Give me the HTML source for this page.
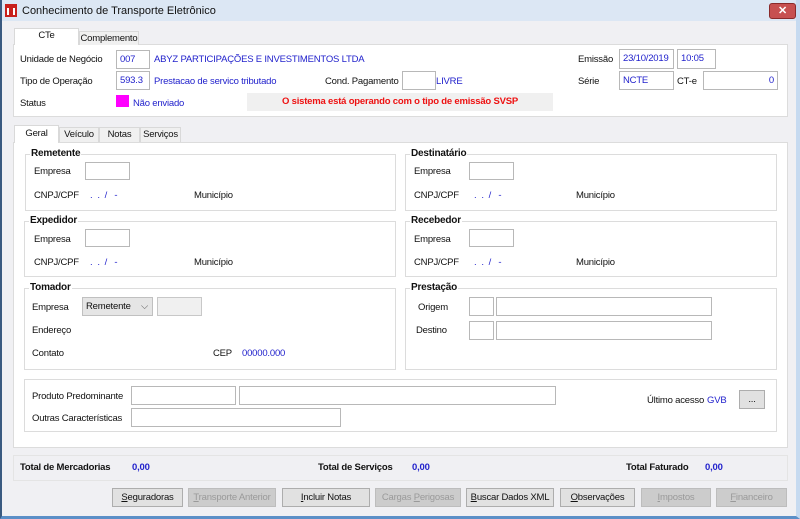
<!DOCTYPE html><html><head><meta charset="utf-8"><style>
*{box-sizing:border-box;margin:0;padding:0}
body{width:800px;height:519px;overflow:hidden;background:#f0f0f3;font-family:"Liberation Sans",sans-serif;font-size:9.5px;letter-spacing:-0.2px;color:#111;position:relative}
.a{position:absolute;white-space:nowrap}
.in{position:absolute;background:#fff;border:1px solid #b8b8b8;color:#2222cc;padding:0 3px;line-height:17px;white-space:nowrap}
.b{color:#2222cc}
.gb{position:absolute;border:1px solid #dcdcdc;background:#fff}
.gt{position:absolute;font-weight:bold;font-size:10px;background:#fff;padding:0 1px;top:-7px;left:4px;line-height:12px;white-space:nowrap}
.btn{position:absolute;top:488px;height:19px;border:1px solid #adadad;background:#e1e1e1;text-align:center;line-height:17px;white-space:nowrap;overflow:hidden}
.dis{color:#9a9a9a;background:#cccccc;border-color:#bdbdbd}
.tab{position:absolute;border:1px solid #d9d9d9;border-bottom:none;background:#f0f0f0;text-align:center;white-space:nowrap}
</style></head><body>
<div class="a" style="left:0;top:0;width:800px;height:519px;border-left:2px solid #3a5a80;border-right:4px solid #c6daf0;border-bottom:3px solid #5b8fc7"></div>
<div class="a" style="left:2px;top:0;width:794px;height:21px;background:#dce7f4"></div>
<div class="a" style="left:5px;top:4px;width:12px;height:13px;background:#c8201c"></div>
<div class="a" style="left:7px;top:8px;width:8px;height:7px;border-left:2px solid #fff;border-right:2px solid #fff"></div>
<div class="a" style="left:22px;top:5px;font-size:11px;letter-spacing:0">Conhecimento de Transporte Eletrônico</div>
<div class="a" style="left:769px;top:3px;width:27px;height:16px;background:#c75050;border:1px solid #8a2a2a;border-radius:3px;color:#fff;text-align:center;font-weight:bold;line-height:14px;font-size:11px">✕</div>

<div class="a" style="left:13px;top:44px;width:775px;height:73px;background:#fff;border:1px solid #dcdcdc"></div>
<div class="tab" style="left:14px;top:28px;width:65px;height:17px;background:#fff;line-height:14px">CTe</div>
<div class="tab" style="left:79px;top:31px;width:60px;height:14px;line-height:13px">Complemento</div>
<div class="a" style="left:20px;top:54px">Unidade de Negócio</div>
<div class="in" style="left:116px;top:50px;width:34px;height:19px">007</div>
<div class="a b" style="left:154px;top:54px">ABYZ PARTICIPAÇÕES E INVESTIMENTOS LTDA</div>
<div class="a" style="left:20px;top:76px">Tipo de Operação</div>
<div class="in" style="left:116px;top:71px;width:34px;height:19px">593.3</div>
<div class="a b" style="left:154px;top:76px">Prestacao de servico tributado</div>
<div class="a" style="left:325px;top:76px">Cond. Pagamento</div>
<div class="in" style="left:402px;top:71px;width:34px;height:19px"></div>
<div class="a b" style="left:436px;top:76px">LIVRE</div>
<div class="a" style="left:20px;top:98px">Status</div>
<div class="a" style="left:116px;top:95px;width:13px;height:12px;background:#ff00ff"></div>
<div class="a b" style="left:133px;top:98px">Não enviado</div>
<div class="a" style="left:247px;top:93px;width:306px;height:18px;background:#f0f0f0;color:#ee1111;font-weight:bold;text-align:center;line-height:18px">O sistema está operando com o tipo de emissão SVSP</div>
<div class="a" style="left:578px;top:54px">Emissão</div>
<div class="in" style="left:619px;top:49px;width:55px;height:20px;line-height:18px">23/10/2019</div>
<div class="in" style="left:677px;top:49px;width:39px;height:20px;line-height:18px">10:05</div>
<div class="a" style="left:578px;top:76px">Série</div>
<div class="in" style="left:619px;top:71px;width:55px;height:19px">NCTE</div>
<div class="a" style="left:677px;top:76px">CT-e</div>
<div class="in" style="left:703px;top:71px;width:75px;height:19px;text-align:right">0</div>

<div class="a" style="left:13px;top:142px;width:775px;height:306px;background:#fff;border:1px solid #dcdcdc"></div>
<div class="tab" style="left:14px;top:125px;width:45px;height:18px;background:#fff;line-height:16px">Geral</div>
<div class="tab" style="left:59px;top:127px;width:40px;height:15px;line-height:14px">Veículo</div>
<div class="tab" style="left:99px;top:127px;width:41px;height:15px;line-height:14px">Notas</div>
<div class="tab" style="left:140px;top:127px;width:41px;height:15px;line-height:14px">Serviços</div>

<div class="gb" style="left:25px;top:154px;width:371px;height:57px"><div class="gt">Remetente</div></div>
<div class="a" style="left:34px;top:166px">Empresa</div><div class="in" style="left:85px;top:162px;width:45px;height:18px"></div>
<div class="a" style="left:34px;top:190px">CNPJ/CPF</div><div class="a b" style="left:90px;top:190px">.&nbsp;&nbsp;.&nbsp;&nbsp;/&nbsp;&nbsp;&nbsp;-</div><div class="a" style="left:194px;top:190px">Município</div>

<div class="gb" style="left:405px;top:154px;width:372px;height:57px"><div class="gt">Destinatário</div></div>
<div class="a" style="left:414px;top:166px">Empresa</div><div class="in" style="left:469px;top:162px;width:45px;height:18px"></div>
<div class="a" style="left:414px;top:190px">CNPJ/CPF</div><div class="a b" style="left:474px;top:190px">.&nbsp;&nbsp;.&nbsp;&nbsp;/&nbsp;&nbsp;&nbsp;-</div><div class="a" style="left:576px;top:190px">Município</div>

<div class="gb" style="left:24px;top:221px;width:372px;height:56px"><div class="gt">Expedidor</div></div>
<div class="a" style="left:34px;top:234px">Empresa</div><div class="in" style="left:85px;top:229px;width:45px;height:18px"></div>
<div class="a" style="left:34px;top:257px">CNPJ/CPF</div><div class="a b" style="left:90px;top:257px">.&nbsp;&nbsp;.&nbsp;&nbsp;/&nbsp;&nbsp;&nbsp;-</div><div class="a" style="left:194px;top:257px">Município</div>

<div class="gb" style="left:405px;top:221px;width:372px;height:56px"><div class="gt">Recebedor</div></div>
<div class="a" style="left:414px;top:234px">Empresa</div><div class="in" style="left:469px;top:229px;width:45px;height:18px"></div>
<div class="a" style="left:414px;top:257px">CNPJ/CPF</div><div class="a b" style="left:474px;top:257px">.&nbsp;&nbsp;.&nbsp;&nbsp;/&nbsp;&nbsp;&nbsp;-</div><div class="a" style="left:576px;top:257px">Município</div>

<div class="gb" style="left:24px;top:288px;width:372px;height:82px"><div class="gt">Tomador</div></div>
<div class="a" style="left:32px;top:302px">Empresa</div>
<div class="a" style="left:82px;top:297px;width:71px;height:19px;background:#e5e5e5;border:1px solid #c0c0c0;padding:0 3px;line-height:17px">Remetente<span style="position:absolute;right:4px;top:0;color:#666">⌵</span></div>
<div class="a" style="left:157px;top:297px;width:45px;height:19px;background:#f0f0f0;border:1px solid #c8c8c8"></div>
<div class="a" style="left:32px;top:325px">Endereço</div>
<div class="a" style="left:32px;top:348px">Contato</div>
<div class="a" style="left:213px;top:348px">CEP</div>
<div class="a b" style="left:242px;top:348px">00000.000</div>

<div class="gb" style="left:405px;top:288px;width:372px;height:82px"><div class="gt">Prestação</div></div>
<div class="a" style="left:418px;top:302px">Origem</div>
<div class="in" style="left:469px;top:297px;width:25px;height:19px"></div><div class="in" style="left:496px;top:297px;width:216px;height:19px"></div>
<div class="a" style="left:416px;top:325px">Destino</div>
<div class="in" style="left:469px;top:321px;width:25px;height:19px"></div><div class="in" style="left:496px;top:321px;width:216px;height:19px"></div>

<div class="gb" style="left:24px;top:379px;width:753px;height:53px"></div>
<div class="a" style="left:32px;top:391px">Produto Predominante</div>
<div class="in" style="left:131px;top:386px;width:105px;height:19px"></div><div class="in" style="left:239px;top:386px;width:317px;height:19px"></div>
<div class="a" style="left:32px;top:413px">Outras Características</div>
<div class="in" style="left:131px;top:408px;width:210px;height:19px"></div>
<div class="a" style="left:647px;top:395px">Último acesso</div>
<div class="a b" style="left:707px;top:395px">GVB</div>
<div class="a" style="left:739px;top:390px;width:26px;height:19px;background:#e1e1e1;border:1px solid #adadad;text-align:center;line-height:17px">...</div>

<div class="a" style="left:13px;top:455px;width:775px;height:26px;border:1px solid #e4e4e4;background:#f0f0f3"></div>
<div class="a" style="left:20px;top:462px;font-weight:bold">Total de Mercadorias</div><div class="a b" style="left:132px;top:462px;font-weight:bold">0,00</div>
<div class="a" style="left:318px;top:462px;font-weight:bold">Total de Serviços</div><div class="a b" style="left:412px;top:462px;font-weight:bold">0,00</div>
<div class="a" style="left:626px;top:462px;font-weight:bold">Total Faturado</div><div class="a b" style="left:705px;top:462px;font-weight:bold">0,00</div>

<div class="btn" style="left:112px;width:71px"><u>S</u>eguradoras</div>
<div class="btn dis" style="left:188px;width:88px"><u>T</u>ransporte Anterior</div>
<div class="btn" style="left:282px;width:88px"><u>I</u>ncluir Notas</div>
<div class="btn dis" style="left:375px;width:86px">Cargas <u>P</u>erigosas</div>
<div class="btn" style="left:466px;width:88px"><u>B</u>uscar Dados XML</div>
<div class="btn" style="left:560px;width:75px"><u>O</u>bservações</div>
<div class="btn dis" style="left:641px;width:70px"><u>I</u>mpostos</div>
<div class="btn dis" style="left:716px;width:71px"><u>F</u>inanceiro</div>
</body></html>
